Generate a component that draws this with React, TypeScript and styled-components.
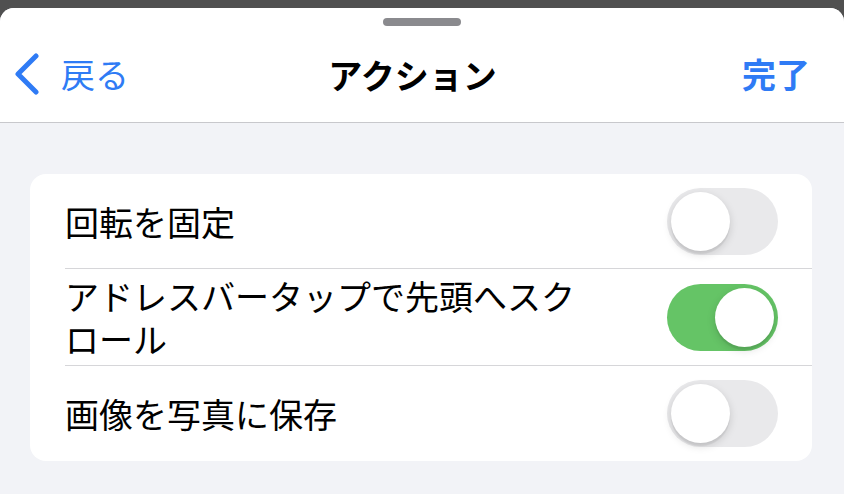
import React, { useState } from "react";
import styled, { createGlobalStyle } from "styled-components";

const GlobalStyle = createGlobalStyle`
  html, body {
    margin: 0;
    padding: 0;
    background: #505050;
  }
  body {
    font-family: "Noto Sans CJK JP", "Noto Sans", sans-serif;
    -webkit-font-smoothing: antialiased;
  }
`;

const Screen = styled.div`
  width: 844px;
  height: 494px;
  padding-top: 8px;
  box-sizing: border-box;
  background: #505050;
  overflow: hidden;
`;

const Sheet = styled.div`
  height: 100%;
  background: #f2f3f7;
  border-radius: 14px 14px 0 0;
  overflow: hidden;
`;

const Header = styled.header`
  background: #ffffff;
  border-bottom: 1px solid #c8c8cc;
  padding-top: 10px;
  display: flex;
  flex-direction: column;
  align-items: center;
`;

const Grabber = styled.div`
  width: 78px;
  height: 8px;
  border-radius: 4px;
  background: #8a8a8e;
`;

const NavBar = styled.nav`
  width: 100%;
  height: 96px;
  display: grid;
  grid-template-columns: 1fr auto 1fr;
  align-items: center;
  padding: 0 34px 0 15px;
  box-sizing: border-box;
`;

const BackButton = styled.button`
  justify-self: start;
  display: flex;
  align-items: center;
  gap: 22px;
  border: 0;
  background: none;
  padding: 0;
  color: #2f7bf5;
  font-family: inherit;
  font-size: 34px;
  line-height: 1;
`;

const Title = styled.h1`
  margin: 0;
  font-size: 34px;
  font-weight: 700;
  color: #000;
`;

const DoneButton = styled.button`
  justify-self: end;
  border: 0;
  background: none;
  padding: 0;
  color: #2f7bf5;
  font-family: inherit;
  font-size: 34px;
  font-weight: 700;
  line-height: 1;
`;

const Card = styled.section`
  margin: 51px 32px 0 30px;
  background: #ffffff;
  border-radius: 16px;
  overflow: hidden;
`;

const Row = styled.div`
  padding-left: 35px;
`;

const RowInner = styled.div<{ $last?: boolean }>`
  min-height: 95px;
  display: flex;
  align-items: center;
  justify-content: space-between;
  padding: 5px 34px 5px 0;
  box-sizing: border-box;
  border-bottom: ${({ $last }) => ($last ? "none" : "1px solid #d6d6d9")};
`;

const Label = styled.span`
  max-width: 530px;
  font-size: 34px;
  line-height: 43px;
  color: #000;
`;

const Track = styled.button<{ $on: boolean }>`
  position: relative;
  flex: none;
  width: 111px;
  height: 67px;
  border-radius: 34px;
  border: 0;
  padding: 0;
  background: ${({ $on }) => ($on ? "#65c466" : "#e9e9eb")};
  cursor: pointer;
`;

const Knob = styled.span<{ $on: boolean }>`
  position: absolute;
  top: 4px;
  left: ${({ $on }) => ($on ? "48px" : "4px")};
  width: 59px;
  height: 59px;
  border-radius: 50%;
  background: #ffffff;
  box-shadow: 0 3px 8px rgba(0, 0, 0, 0.15), 0 3px 1px rgba(0, 0, 0, 0.06);
`;

const Chevron = () => (
  <svg width="24" height="42" viewBox="0 0 24 42" fill="none">
    <path
      d="M21 3 L3 21 L21 39"
      stroke="#2f7bf5"
      strokeWidth="5"
      strokeLinecap="round"
      strokeLinejoin="round"
    />
  </svg>
);

const Toggle = ({ on, onClick }: { on: boolean; onClick: () => void }) => (
  <Track $on={on} onClick={onClick} aria-pressed={on}>
    <Knob $on={on} />
  </Track>
);

const items = [
  { label: "回転を固定", on: false },
  { label: "アドレスバータップで先頭へスクロール", on: true },
  { label: "画像を写真に保存", on: false },
];

export default function App() {
  const [state, setState] = useState(items.map((i) => i.on));

  return (
    <Screen>
      <GlobalStyle />
      <Sheet>
        <Header>
          <Grabber />
          <NavBar>
            <BackButton>
              <Chevron />
              戻る
            </BackButton>
            <Title>アクション</Title>
            <DoneButton>完了</DoneButton>
          </NavBar>
        </Header>
        <Card>
          {items.map((item, i) => (
            <Row key={item.label}>
              <RowInner $last={i === items.length - 1}>
                <Label>{item.label}</Label>
                <Toggle
                  on={state[i]}
                  onClick={() =>
                    setState((s) => s.map((v, j) => (j === i ? !v : v)))
                  }
                />
              </RowInner>
            </Row>
          ))}
        </Card>
      </Sheet>
    </Screen>
  );
}
